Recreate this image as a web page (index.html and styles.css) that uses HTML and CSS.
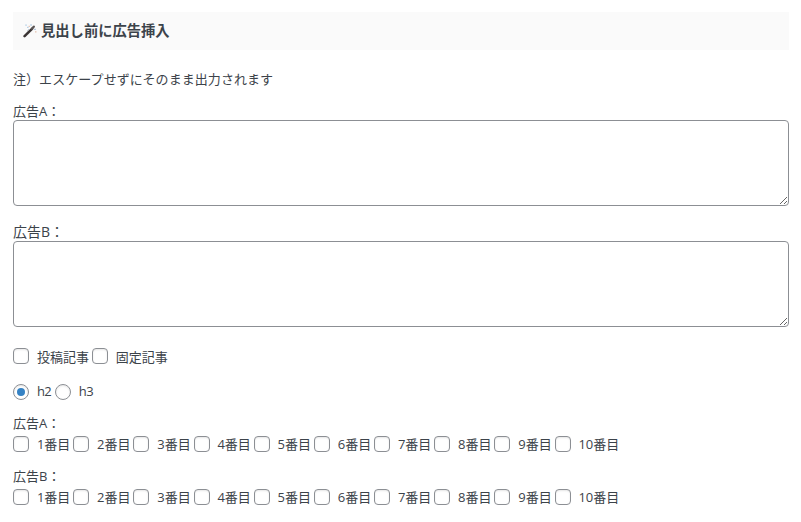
FILE: index.html
```
<!DOCTYPE html>
<html lang="ja">
<head>
<meta charset="utf-8">
<meta name="viewport" content="width=device-width">
<title>見出し前に広告挿入</title>
<link rel="stylesheet" href="styles.css">
</head>

<body>
<form class="settings">
<h3 class="heading">
	<svg class="wand" viewBox="0 0 14 14" width="14" height="14">
		<path d="M1.6 12.2 9 4.8" stroke="#3a3433" stroke-width="2.5" stroke-linecap="round"/>
		<path d="M9 4.6 10.8 2.7" stroke="#5a5555" stroke-width="2.3" stroke-linecap="round"/>
		<path d="M4.5 6.6 5.8 5.3" stroke="#9fb2c6" stroke-width="1"/>
		<path d="M2.4 1.1h1.3M4.2 3.3h1.3M7.4 1h1.3" stroke="#a9c8e2" stroke-width="1.3"/>
		<path d="M5.7 2.3h1M12.2 7.8h1.2" stroke="#dfb39c" stroke-width="1.2"/>
		<path d="M11.4 5.4h1.2" stroke="#8aa9cc" stroke-width="1.2"/>
	</svg>
	<span>見出し前に広告挿入</span>
</h3>
<p class="note">注）エスケープせずにそのまま出力されます</p>

<div class="field">
	<label for="ad_a">広告A：</label>
	<textarea id="ad_a" name="ad_a"></textarea>
</div>
<div class="field field-b">
	<label for="ad_b">広告B：</label>
	<textarea id="ad_b" name="ad_b"></textarea>
</div>

<div class="choices types">
	<label><input type="checkbox" name="post">投稿記事</label>
	<label><input type="checkbox" name="page">固定記事</label>
</div>
<div class="choices levels">
	<label><input type="radio" name="level" value="h2" checked>h2</label>
	<label><input type="radio" name="level" value="h3">h3</label>
</div>

<div class="position">
	<div class="position-title">広告A：</div>
	<div class="choices">
		<label><input type="checkbox" name="a1">1番目</label>
		<label><input type="checkbox" name="a2">2番目</label>
		<label><input type="checkbox" name="a3">3番目</label>
		<label><input type="checkbox" name="a4">4番目</label>
		<label><input type="checkbox" name="a5">5番目</label>
		<label><input type="checkbox" name="a6">6番目</label>
		<label><input type="checkbox" name="a7">7番目</label>
		<label><input type="checkbox" name="a8">8番目</label>
		<label><input type="checkbox" name="a9">9番目</label>
		<label><input type="checkbox" name="a10">10番目</label>
	</div>
</div>
<div class="position">
	<div class="position-title">広告B：</div>
	<div class="choices">
		<label><input type="checkbox" name="b1">1番目</label>
		<label><input type="checkbox" name="b2">2番目</label>
		<label><input type="checkbox" name="b3">3番目</label>
		<label><input type="checkbox" name="b4">4番目</label>
		<label><input type="checkbox" name="b5">5番目</label>
		<label><input type="checkbox" name="b6">6番目</label>
		<label><input type="checkbox" name="b7">7番目</label>
		<label><input type="checkbox" name="b8">8番目</label>
		<label><input type="checkbox" name="b9">9番目</label>
		<label><input type="checkbox" name="b10">10番目</label>
	</div>
</div>
</form>
</body>
</html>
```
FILE: styles.css
```
* {
	box-sizing: border-box;
}
body {
	margin: 0;
	background: #fff;
	color: #3c434a;
	font-family: "Open Sans", "Noto Sans CJK JP", sans-serif;
	font-size: 13px;
	line-height: 20px;
}
.settings {
	padding: 12px 12px 0 13px;
}
.heading {
	display: flex;
	align-items: center;
	gap: 4px;
	height: 38px;
	margin: 0 0 19px;
	padding: 0 10px;
	background: #fafafa;
	font-size: 14.3px;
	font-weight: bold;
}
.wand {
	fill: none;
}
.note {
	margin: 0 0 12px;
	letter-spacing: 0.06px;
}
.field {
	display: flex;
	flex-direction: column;
	margin-bottom: 16px;
}
.field label {
	height: 19px;
}
.field-b {
	margin-bottom: 19px;
}
.field-b label {
	height: 19px;
	font-size: 14px;
}
textarea {
	display: block;
	width: 100%;
	height: 86px;
	margin: 0;
	padding: 2px 6px;
	border: 1px solid #8c8f94;
	border-radius: 4px;
	background: #fff;
	resize: vertical;
}
.choices {
	display: flex;
	gap: 2.85px;
	height: 20px;
}
.choices label {
	display: flex;
	gap: 7.9px;
	white-space: nowrap;
}
.types {
	margin-bottom: 16px;
}
.types label {
	line-height: 22px;
}
.levels {
	gap: 3.8px;
	margin-bottom: 11px;
}
.levels label {
	line-height: 19px;
	letter-spacing: -0.6px;
}
.position {
	margin-bottom: 12px;
}
.position-title {
	height: 21px;
}
input {
	appearance: none;
	flex: none;
	width: 16px;
	height: 16px;
	margin: 2px 0 0;
	border: 1px solid #8c8f94;
	border-radius: 4px;
	background: #fff;
	box-shadow: inset 0 1px 2px rgba(0,0,0,0.1);
}
input[type=radio] {
	display: grid;
	place-items: center;
	border-radius: 50%;
}
input[type=radio]:checked::before {
	content: "";
	width: 8px;
	height: 8px;
	border-radius: 50%;
	background: #3582c4;
}
```
